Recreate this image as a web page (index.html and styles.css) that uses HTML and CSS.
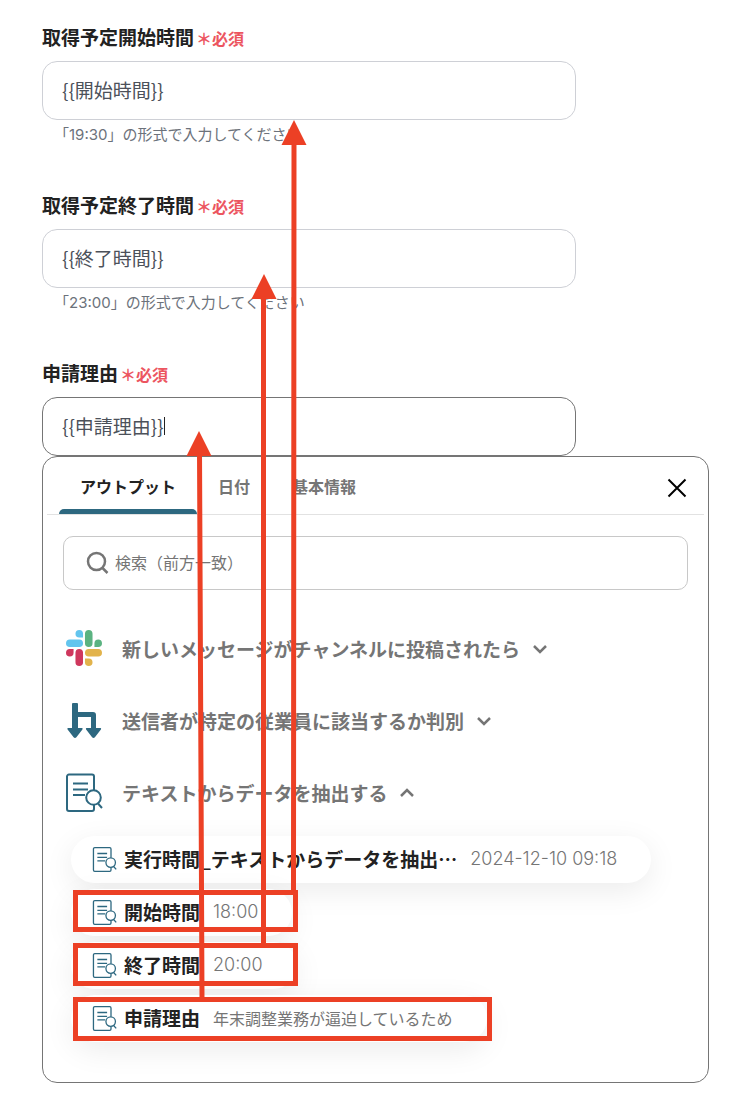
FILE: index.html
```
<!DOCTYPE html>
<html lang="ja">
<head>
  <meta charset="UTF-8">
  <meta name="viewport" content="width=device-width, initial-scale=1">
  <title>申請フォーム</title>
  <link rel="stylesheet" href="styles.css">
</head>
<body>
<svg class="defs" aria-hidden="true">
  <symbol id="doc" viewBox="0 0 38 40">
    <path d="M29 18V4.500a2 2 0 0 0-2-2H4a2 2 0 0 0-2 2V37a2 2 0 0 0 2 2h23a2 2 0 0 0 2-2v-4"/>
    <path d="M8 11.500h15M8 17.500h15M8 23h12"/>
    <circle cx="28.500" cy="25.500" r="7.300"/>
    <path d="M33 31.500l4 4.500"/>
  </symbol>
  <symbol id="petal" viewBox="0 0 24 24">
    <path d="M8.834 5.042a2.528 2.528 0 0 1-2.521-2.52A2.528 2.528 0 0 1 8.834 0a2.528 2.528 0 0 1 2.521 2.522v2.520H8.834zM8.834 6.313a2.528 2.528 0 0 1 2.521 2.521 2.528 2.528 0 0 1-2.521 2.521H2.522A2.528 2.528 0 0 1 0 8.834a2.528 2.528 0 0 1 2.522-2.521h6.312z"/>
  </symbol>
  <symbol id="chevron" viewBox="0 0 16 16">
    <path d="M2 5l6 6 6-6"/>
  </symbol>
</svg>

<main class="page">
  <div class="field">
    <label for="start">取得予定開始時間<span class="required">＊必須</span></label>
    <input type="text" id="start" value="{{開始時間}}">
    <p class="hint">「19:30」の形式で入力してください</p>
  </div>

  <div class="field">
    <label for="end">取得予定終了時間<span class="required">＊必須</span></label>
    <input type="text" id="end" value="{{終了時間}}">
    <p class="hint">「23:00」の形式で入力してください</p>
  </div>

  <div class="field active">
    <label for="reason">申請理由<span class="required">＊必須</span></label>
    <input type="text" id="reason" value="{{申請理由}}">
    <span class="caret"></span>
  </div>

  <section class="panel">
    <div class="tabs">
      <button type="button" class="tab selected">アウトプット</button>
      <button type="button" class="tab">日付</button>
      <button type="button" class="tab">基本情報</button>
      <button type="button" class="close" aria-label="閉じる">
        <svg width="20" height="20" viewBox="0 0 20 20"><path d="M1.500 1.500l17 17M18.500 1.500l-17 17"/></svg>
      </button>
    </div>

    <label class="search">
      <svg width="24" height="24" viewBox="0 0 24 24"><circle cx="11.500" cy="10.500" r="8.500"/><path d="M17.500 17l5 5"/></svg>
      <input type="text" placeholder="検索（前方一致）" aria-label="検索">
    </label>

    <div class="groups">
      <button type="button" class="group">
        <svg class="icon" viewBox="0 0 24 24">
          <use href="#petal" fill="#63c5ee"/>
          <use href="#petal" fill="#5bb381" transform="rotate(90 12 12)"/>
          <use href="#petal" fill="#e2b34b" transform="rotate(180 12 12)"/>
          <use href="#petal" fill="#cf375d" transform="rotate(270 12 12)"/>
        </svg>
        新しいメッセージがチャンネルに投稿されたら
        <svg class="chevron"><use href="#chevron"/></svg>
      </button>
      <button type="button" class="group">
        <svg class="icon" viewBox="0 0 36 36">
          <path class="branch" d="M7 1h4a1 1 0 0 1 1 1v8h15a3 3 0 0 1 3 3v13h4.500q1 .5.400 1.400l-6 7.800q-1.400 1.600-2.800 0l-6-7.800q-.6-.9.400-1.400H25V15H12v11h4q1 .5.400 1.400l-6 7.800q-1.400 1.600-2.800 0l-6-7.800q-.6-.9.400-1.400H6V2a1 1 0 0 1 1-1z"/>
        </svg>
        送信者が特定の従業員に該当するか判別
        <svg class="chevron"><use href="#chevron"/></svg>
      </button>
      <button type="button" class="group">
        <svg class="icon doc" viewBox="1 0 38 40"><use href="#doc" width="38" height="40"/></svg>
        テキストからデータを抽出する
        <svg class="chevron up"><use href="#chevron"/></svg>
      </button>
    </div>

    <div class="outputs">
      <button type="button" class="output">
        <svg class="doc"><use href="#doc"/></svg>
        <b>実行時間_テキストからデータを抽出…</b><span class="num">2024-12-10 09:18</span>
      </button>
      <button type="button" class="output">
        <svg class="doc"><use href="#doc"/></svg>
        <b>開始時間</b><span class="num">18:00</span>
      </button>
      <button type="button" class="output">
        <svg class="doc"><use href="#doc"/></svg>
        <b>終了時間</b><span class="num">20:00</span>
      </button>
      <button type="button" class="output">
        <svg class="doc"><use href="#doc"/></svg>
        <b>申請理由</b><span>年末調整業務が逼迫しているため</span>
      </button>
    </div>
  </section>

  <!-- arrows from each output to the field that uses it -->
  <svg class="notes" width="744" height="1098" viewBox="0 0 744 1098" aria-hidden="true">
    <rect x="75.500" y="892.500" width="220" height="37"/>
    <rect x="75.500" y="945.500" width="220" height="38"/>
    <rect x="75.500" y="999.500" width="414" height="39"/>
    <path d="M293.500 892L294 140M263.500 945V294M202 999L199.500 450"/>
    <path class="head" d="M294 120l12.500 25h-25zM264 274l12.500 25h-25zM199 431l12.500 25h-25z"/>
  </svg>
</main>
</body>
</html>
```
FILE: styles.css
```
* { box-sizing: border-box; }
body { margin: 0; background: #fff; color: #222; font-family: "Noto Sans CJK JP", sans-serif; }
button, input { font-family: inherit; }
button { border: 0; background: none; padding: 0; cursor: pointer; }
svg { flex: none; fill: none; }
.defs { position: absolute; width: 0; height: 0; }
.page { position: relative; padding: 24px 35px 15px 42px; }

/* form */
.field { position: relative; width: 80%; height: 168px; }
.field.active { height: 96px; }
.field label { display: block; height: 37px; font-size: 19px; line-height: 26px; font-weight: bold; }
.required { margin-left: 2px; color: #ec5560; font-size: 16px; }
.field input { display: block; width: 100%; height: 59px; padding: 0 19px 2px; border: 1px solid #ced0d6; border-radius: 15px; background: #fff; color: #4c515a; font-size: 19px; outline: 0; }
.field.active input { border-color: #757575; }
.hint { margin: 0; padding-left: 12px; color: #6c727b; font-family: Inter, "Noto Sans CJK JP", sans-serif; font-size: 15px; line-height: 30px; }
.caret { position: absolute; left: 122px; top: 57px; width: 1px; height: 18px; background: #222; }

/* output picker */
.panel { border: 1px solid #757575; border-radius: 15px; padding: 0 4px 40px; background: #fff; }
.tabs { display: flex; height: 58px; padding: 0 17px 0 12px; border-bottom: 1px solid #e2e2e2; }
.tab { position: relative; padding: 0 21px; color: #757575; font-size: 16px; font-weight: bold; }
.tab.selected { color: #222; }
.tab.selected::after { content: ""; position: absolute; left: 0; right: 0; bottom: 0; height: 5px; border-radius: 5px 5px 0 0; background: #2d6880; }
.close { margin-left: auto; padding-top: 8px; stroke: #000; stroke-width: 2; }
.search { display: flex; align-items: center; gap: 6px; height: 54px; margin: 21px 16px 0; padding: 0 21px; border: 1px solid #c8c8c8; border-radius: 10px; stroke: #757575; stroke-width: 2.5; }
.search input { flex: 1; min-width: 0; padding: 0 0 2px; border: 0; outline: 0; color: #222; font-size: 16px; }
.search input::placeholder { color: #757575; }

.groups { padding: 22px 0 0 19px; }
.group { display: flex; align-items: center; height: 72px; color: #757575; font-size: 19px; font-weight: bold; }
.icon { width: 36px; height: 36px; margin-right: 20px; }
.icon.doc { width: 38px; height: 40px; margin-right: 18px; }
.doc { stroke: #2d6880; stroke-width: 2; }
.branch { fill: #2d6880; }
.chevron { width: 16px; height: 16px; margin: 2px 0 0 12px; stroke: #757575; stroke-width: 2.5; }
.chevron.up { transform: rotate(180deg); }

.outputs { display: flex; flex-direction: column; align-items: flex-start; gap: 6px; padding: 8px 0 0 24px; }
.output { display: flex; align-items: center; height: 47px; padding: 0 34px 2px 21px; border-radius: 24px; background: #fff; box-shadow: 0 8px 30px rgba(0, 0, 0, .08); }
.output .doc { width: 25px; height: 26px; margin-right: 7px; }
.output b { color: #222; font-size: 19px; }
.output span { margin-left: 13px; color: #757575; font-size: 16px; }
.output .num { font-family: Inter, sans-serif; font-size: 18px; font-weight: 300; }

/* annotations on top of the form */
.notes { position: absolute; left: 0; top: 0; stroke: #ec4025; stroke-width: 5; pointer-events: none; }
.notes .head { fill: #ec4025; stroke: none; }
```
